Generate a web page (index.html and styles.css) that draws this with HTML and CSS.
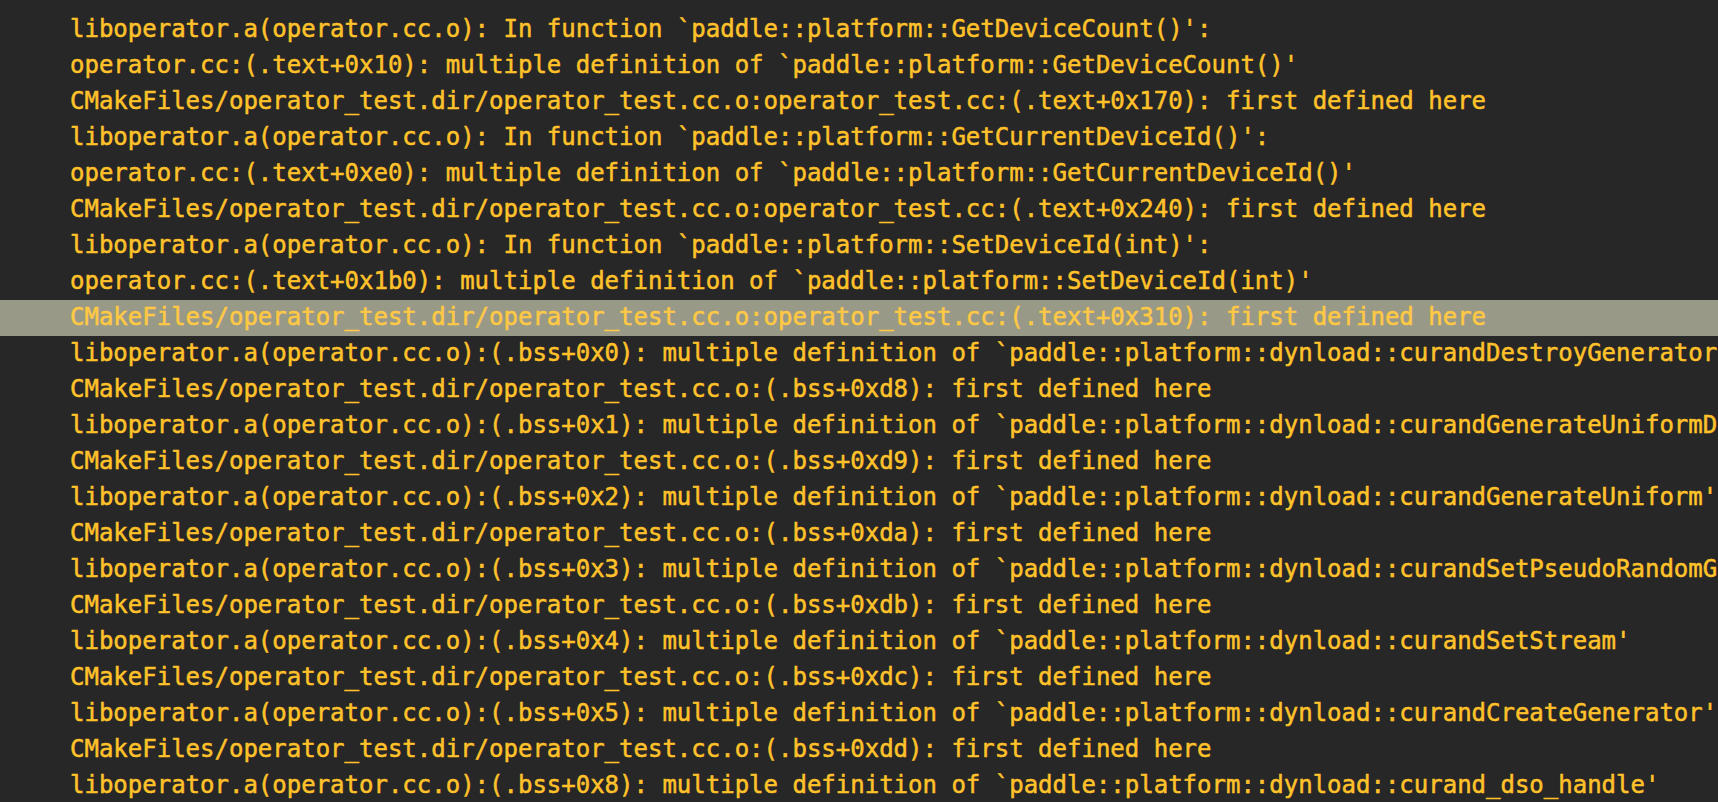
FILE: index.html
```html
<!DOCTYPE html>
<html>
<head>
<meta charset="utf-8">
<link rel="stylesheet" href="styles.css">
</head>
<body>
<div class="console">
<div class="line">liboperator.a(operator.cc.o): In function `paddle::platform::GetDeviceCount()':</div>
<div class="line">operator.cc:(.text+0x10): multiple definition of `paddle::platform::GetDeviceCount()'</div>
<div class="line">CMakeFiles/operator_test.dir/operator_test.cc.o:operator_test.cc:(.text+0x170): first defined here</div>
<div class="line">liboperator.a(operator.cc.o): In function `paddle::platform::GetCurrentDeviceId()':</div>
<div class="line">operator.cc:(.text+0xe0): multiple definition of `paddle::platform::GetCurrentDeviceId()'</div>
<div class="line">CMakeFiles/operator_test.dir/operator_test.cc.o:operator_test.cc:(.text+0x240): first defined here</div>
<div class="line">liboperator.a(operator.cc.o): In function `paddle::platform::SetDeviceId(int)':</div>
<div class="line">operator.cc:(.text+0x1b0): multiple definition of `paddle::platform::SetDeviceId(int)'</div>
<div class="line selected">CMakeFiles/operator_test.dir/operator_test.cc.o:operator_test.cc:(.text+0x310): first defined here</div>
<div class="line">liboperator.a(operator.cc.o):(.bss+0x0): multiple definition of `paddle::platform::dynload::curandDestroyGenerator'</div>
<div class="line">CMakeFiles/operator_test.dir/operator_test.cc.o:(.bss+0xd8): first defined here</div>
<div class="line">liboperator.a(operator.cc.o):(.bss+0x1): multiple definition of `paddle::platform::dynload::curandGenerateUniformDouble'</div>
<div class="line">CMakeFiles/operator_test.dir/operator_test.cc.o:(.bss+0xd9): first defined here</div>
<div class="line">liboperator.a(operator.cc.o):(.bss+0x2): multiple definition of `paddle::platform::dynload::curandGenerateUniform'</div>
<div class="line">CMakeFiles/operator_test.dir/operator_test.cc.o:(.bss+0xda): first defined here</div>
<div class="line">liboperator.a(operator.cc.o):(.bss+0x3): multiple definition of `paddle::platform::dynload::curandSetPseudoRandomGeneratorSeed'</div>
<div class="line">CMakeFiles/operator_test.dir/operator_test.cc.o:(.bss+0xdb): first defined here</div>
<div class="line">liboperator.a(operator.cc.o):(.bss+0x4): multiple definition of `paddle::platform::dynload::curandSetStream'</div>
<div class="line">CMakeFiles/operator_test.dir/operator_test.cc.o:(.bss+0xdc): first defined here</div>
<div class="line">liboperator.a(operator.cc.o):(.bss+0x5): multiple definition of `paddle::platform::dynload::curandCreateGenerator'</div>
<div class="line">CMakeFiles/operator_test.dir/operator_test.cc.o:(.bss+0xdd): first defined here</div>
<div class="line">liboperator.a(operator.cc.o):(.bss+0x8): multiple definition of `paddle::platform::dynload::curand_dso_handle'</div>
</div>
</body>
</html>
```

FILE: styles.css
```css
html, body {
  margin: 0;
  padding: 0;
  background: #272727;
  overflow: hidden;
  height: 100%;
}

.console {
  padding-top: 12px;
  font-family: "DejaVu Sans Mono", "Liberation Mono", monospace;
  font-size: 24px;
  color: #ffc22a;
}

.line {
  height: 36px;
  line-height: 34px;
  padding-left: 70px;
  white-space: pre;
  overflow: hidden;
  -webkit-text-stroke: 0.5px #ffc22a;
}

.line.selected {
  background: #999987;
  color: #ffc944;
  -webkit-text-stroke-color: #ffc944;
}
```
